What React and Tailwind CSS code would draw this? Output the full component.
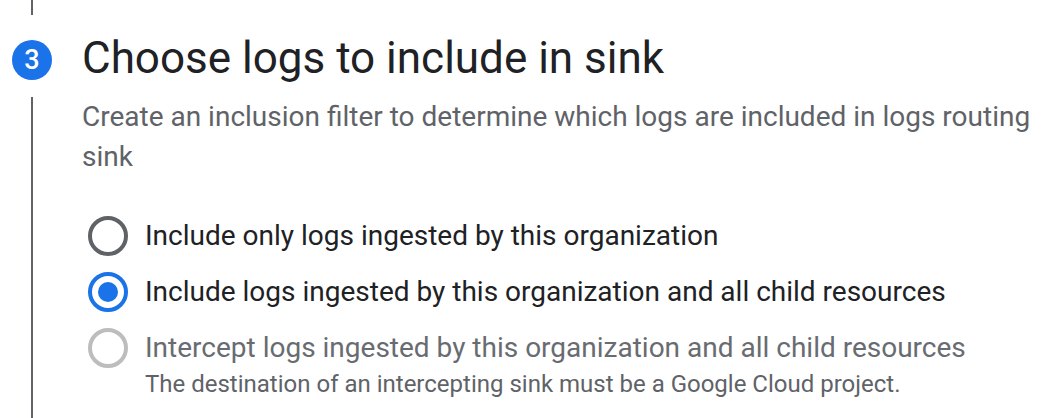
import React, { useState } from 'react';

const options = [
  { id: 'org', label: 'Include only logs ingested by this organization' },
  { id: 'children', label: 'Include logs ingested by this organization and all child resources' },
  {
    id: 'intercept',
    label: 'Intercept logs ingested by this organization and all child resources',
    hint: 'The destination of an intercepting sink must be a Google Cloud project.',
    disabled: true,
  },
];

const Radio = ({ checked, disabled }) => {
  if (disabled) {
    return <span className="block w-10 h-10 rounded-full border-4 border-[#bdbdbd] shrink-0" />;
  }
  if (checked) {
    return (
      <span className="flex items-center justify-center w-10 h-10 rounded-full border-4 border-[#1a73e8] shrink-0">
        <span className="block w-5 h-5 rounded-full bg-[#1a73e8]" />
      </span>
    );
  }
  return <span className="block w-10 h-10 rounded-full border-4 border-[#5f6368] shrink-0" />;
};

export default function App() {
  const [selected, setSelected] = useState('children');

  return (
    <div className="w-[1064px] h-[418px] bg-white overflow-hidden flex" style={{ fontFamily: 'Roboto, sans-serif' }}>
      {/* Stepper rail */}
      <div className="w-[64px] flex flex-col items-center shrink-0">
        <div className="w-[2px] h-[15px] bg-[#5f6368]" />
        <div className="mt-[25px] w-10 h-10 rounded-full bg-[#1a73e8] flex items-center justify-center text-white text-[27px] leading-none font-medium">
          3
        </div>
        <div className="mt-[17px] w-[2px] flex-1 bg-[#5f6368]" />
      </div>

      <div className="pl-[18px] pt-[32px] flex-1">
        <h2 className="text-[44px] leading-[52px] text-[#202124]">Choose logs to include in sink</h2>
        <p className="mt-[13px] text-[28px] leading-[40px] text-[#5f6368] w-[960px]">
          Create an inclusion filter to determine which logs are included in logs routing sink
        </p>

        <div className="mt-[39px] flex flex-col gap-[16px]">
          {options.map((opt) => (
            <button
              key={opt.id}
              type="button"
              disabled={opt.disabled}
              onClick={() => setSelected(opt.id)}
              className="flex items-start gap-[17px] text-left ml-[6px]"
            >
              <Radio checked={selected === opt.id} disabled={opt.disabled} />
              <div>
                <div
                  className={
                    'text-[28px] leading-[40px] ' + (opt.disabled ? 'text-[#686c71]' : 'text-[#202124]')
                  }
                >
                  {opt.label}
                </div>
                {opt.hint && (
                  <div className="mt-[2px] text-[24px] leading-[28px] text-[#5f6368]">{opt.hint}</div>
                )}
              </div>
            </button>
          ))}
        </div>
      </div>
    </div>
  );
}
